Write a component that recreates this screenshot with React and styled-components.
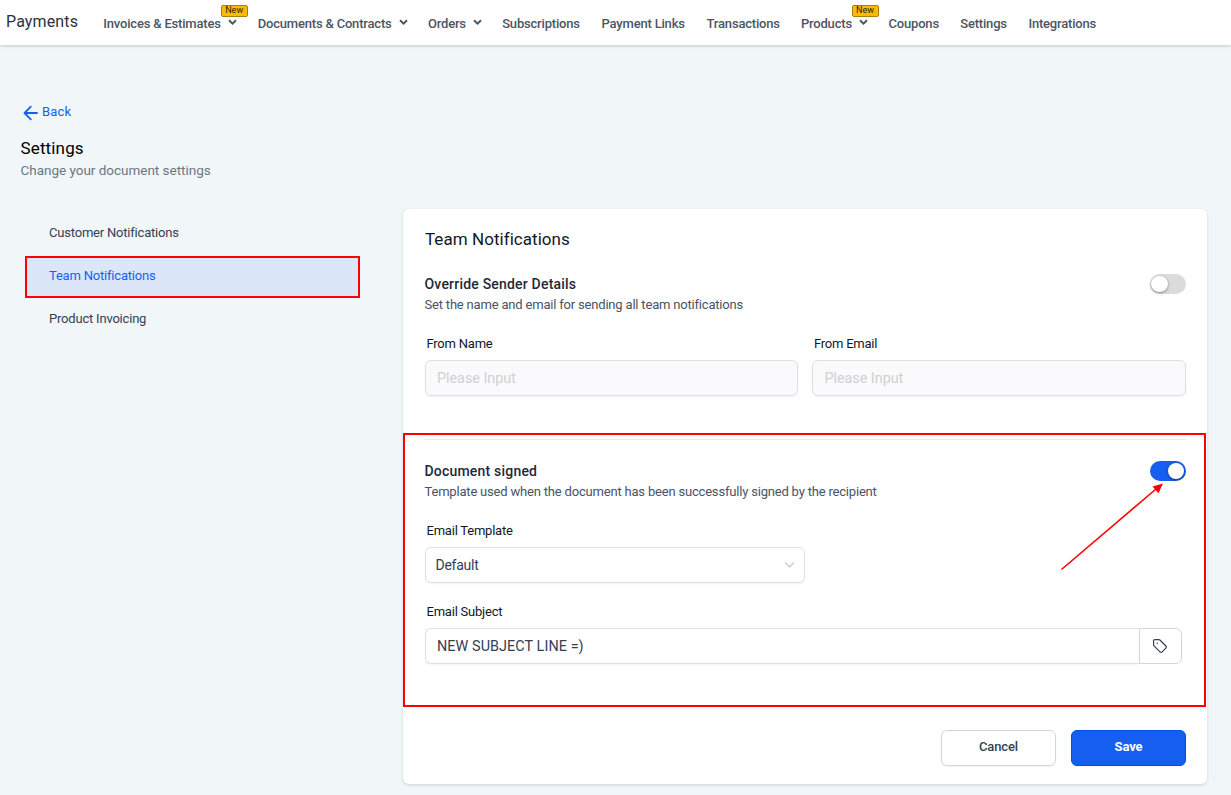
import styled, { createGlobalStyle } from 'styled-components';

const GlobalStyle = createGlobalStyle`
	*, *::before, *::after {
		box-sizing: border-box;
	}

	body {
		margin: 0;
		background-color: #f1f6f9;
		font-family: Roboto, 'Liberation Sans', sans-serif;
		font-size: 13px;
		color: #101828;
		overflow: hidden;
	}

	input, button {
		font-family: inherit;
	}
`;

const Page = styled.div`
	position: relative;
	min-height: 795px;
`;

const Header = styled.header`
	display: flex;
	height: 45px;
	padding-left: 6px;
	background-color: #fff;
	box-shadow: 0 1px 3px rgba(16, 24, 40, 0.2);
`;

const Brand = styled.div`
	width: 97.3px;
	padding-top: 12px;
	font-size: 16px;
	line-height: 20px;
	letter-spacing: 0.13px;
	color: #2a3342;
`;

const Nav = styled.nav`
	display: flex;
	padding-top: 16px;
`;

const NavItem = styled.a`
	position: relative;
	display: flex;
	width: ${({ $width }) => $width}px;
	flex-shrink: 0;
	font-weight: 500;
	line-height: 16px;
	letter-spacing: -0.19px;
	color: #4b5563;
	white-space: nowrap;

	svg {
		margin: 3px 0 0 7px;
	}
`;

const NewBadge = styled.span`
	position: absolute;
	top: -11px;
	right: 10px;
	width: 27px;
	height: 12px;
	border: 1px solid #a87f10;
	border-radius: 2px;
	background-color: #ffb900;
	font-size: 9px;
	font-weight: 400;
	line-height: 9px;
	letter-spacing: 0;
	text-align: center;
	color: #2b2608;
`;

const Intro = styled.section`
	padding: 58px 0 0 20.5px;
`;

const BackLink = styled.a`
	display: flex;
	align-items: center;
	height: 18px;
	line-height: 18px;
	letter-spacing: 0.2px;
	color: #155eef;

	svg {
		margin: 2px 4.5px 0 2px;
	}
`;

const Title = styled.h1`
	margin: 16px 0 0;
	font-size: 17px;
	font-weight: 400;
	line-height: 22px;
	letter-spacing: 0.15px;
	color: #000;
`;

const Subtitle = styled.p`
	margin: 1px 0;
	font-size: 13.5px;
	line-height: 20px;
	letter-spacing: -0.02px;
	color: #6b7683;
`;

const Content = styled.main`
	display: flex;
	align-items: flex-start;
	padding: 28px 24px 0 25px;
`;

const SideMenu = styled.aside`
	width: 335px;
	margin: 4px 43px 0 0;
`;

const SideItem = styled.a`
	display: block;
	height: ${({ $active }) => ($active ? 42 : 43)}px;
	margin-bottom: ${({ $active }) => ($active ? 1 : 0)}px;
	padding-left: ${({ $active }) => ($active ? 22 : 24)}px;
	border: ${({ $active }) => ($active ? '2px solid #f00' : 'none')};
	background-color: ${({ $active }) => ($active ? '#dbe7f9' : 'transparent')};
	line-height: ${({ $active }) => ($active ? 35 : 40)}px;
	letter-spacing: -0.2px;
	color: ${({ $active }) => ($active ? '#155eef' : '#344054')};
`;

const Card = styled.section`
	flex: 1;
	height: 575px;
	border-radius: 6px;
	background-color: #fff;
	box-shadow: 0 1px 3px rgba(16, 24, 40, 0.16);
`;

const SenderSection = styled.div`
	height: 224px;
	padding: 19px 21px 0 22px;
`;

const CardTitle = styled.h2`
	margin: 0 0 24px;
	font-size: 17px;
	font-weight: 400;
	line-height: 22px;
	letter-spacing: 0.05px;
`;

const SectionHead = styled.div`
	display: flex;
	justify-content: space-between;
	align-items: flex-start;
	height: 40px;
`;

const SectionTitle = styled.h3`
	margin: 0 0 1px -0.5px;
	font-size: 14px;
	font-weight: 500;
	line-height: 20px;
	letter-spacing: 0.2px;
	color: #1d2939;
`;

const SectionText = styled.p`
	margin: 0 0 0 -0.5px;
	line-height: 20px;
	letter-spacing: -0.19px;
	color: #475467;
`;

const Toggle = styled.span`
	display: flex;
	justify-content: ${({ $on }) => ($on ? 'flex-end' : 'flex-start')};
	width: 36px;
	height: 20px;
	padding: 2px ${({ $on }) => ($on ? 2 : 1)}px;
	border-radius: 10px;
	background-color: ${({ $on }) => ($on ? '#155eef' : '#dbdbdb')};

	&::after {
		content: '';
		width: ${({ $on }) => ($on ? 16 : 17)}px;
		height: 16px;
		border-radius: 50%;
		background-color: #fff;
		box-shadow: 0 1px 3px rgba(0, 0, 0, 0.4);
	}
`;

const FieldRow = styled.div`
	display: grid;
	grid-template-columns: 373px 1fr;
	gap: 14.4px;
`;

const Field = styled.label`
	display: block;
	width: ${({ $width }) => ($width ? `${$width}px` : 'auto')};
	margin-top: ${({ $top }) => $top || 19}px;
`;

const Label = styled.span`
	display: block;
	height: 27px;
	padding: 1px 0 0 1.5px;
	line-height: 20px;
	letter-spacing: -0.22px;
`;

const Input = styled.input`
	display: block;
	width: 100%;
	height: 36px;
	padding: 0 11px;
	border: 1px solid #dfe0e6;
	border-radius: 6px;
	background-color: #fff;
	box-shadow: 0 1px 2px rgba(16, 24, 40, 0.05);
	font-size: 14.4px;
	letter-spacing: -0.03px;
	color: #344054;

	&:disabled {
		background-color: #fafafc;
	}

	&::placeholder {
		color: #d0d0d2;
	}
`;

const Highlight = styled.div`
	width: 803px;
	height: 274px;
	padding: 4px 18px 0 20px;
	border: 2px solid #f00;
`;

const Divider = styled.hr`
	height: 1px;
	margin: 0 0 21px;
	border: 0;
	background-color: #e9eaeb;
`;

const Select = styled.div`
	display: flex;
	justify-content: space-between;
	align-items: center;
	height: 36px;
	padding: 0 9px 0 9.5px;
	border: 1px solid #dfe0e6;
	border-radius: 6px;
	box-shadow: 0 1px 2px rgba(16, 24, 40, 0.05);
	font-size: 14px;
	letter-spacing: -0.25px;
	color: #344054;
`;

const InputGroup = styled.div`
	display: flex;

	${Input} {
		flex: 1;
		border-right: 0;
		border-radius: 6px 0 0 6px;
		letter-spacing: 0.07px;
	}
`;

const TagButton = styled.button`
	display: flex;
	justify-content: center;
	align-items: center;
	width: 43px;
	height: 36px;
	padding: 0 1px 0 0;
	border: 1px solid #d0d5dd;
	border-radius: 0 6px 6px 0;
	background-color: #fff;
`;

const Footer = styled.footer`
	display: flex;
	justify-content: flex-end;
	gap: 15px;
	padding: 23px 21px 0 0;
`;

const Button = styled.button`
	width: 115px;
	height: 36px;
	padding: 0 0 3px;
	border: 1px solid ${({ $primary }) => ($primary ? '#004eeb' : '#d0d5dd')};
	border-radius: 6px;
	background-color: ${({ $primary }) => ($primary ? '#155eef' : '#fff')};
	box-shadow: 0 1px 2px rgba(16, 24, 40, 0.05);
	font-size: 13px;
	font-weight: ${({ $primary }) => ($primary ? 700 : 500)};
	letter-spacing: -0.1px;
	color: ${({ $primary }) => ($primary ? '#fff' : '#344054')};
`;

const Pointer = styled.svg`
	position: absolute;
	top: 480px;
	left: 1058px;
`;

const navItems = [
	{ label: 'Invoices & Estimates', width: 154.4, menu: true, badge: true },
	{ label: 'Documents & Contracts', width: 170.3, menu: true },
	{ label: 'Orders', width: 74.2, menu: true },
	{ label: 'Subscriptions', width: 99.4 },
	{ label: 'Payment Links', width: 105 },
	{ label: 'Transactions', width: 94.4 },
	{ label: 'Products', width: 87.6, menu: true, badge: true },
	{ label: 'Coupons', width: 71.7 },
	{ label: 'Settings', width: 68.2 },
	{ label: 'Integrations', width: 80 }
];

const sideItems = ['Customer Notifications', 'Team Notifications', 'Product Invoicing'];

const NavChevron = () => (
	<svg width="9" height="7" viewBox="0 0 9 7" fill="none" stroke="#4b5563" strokeWidth="2">
		<path d="M1 1.2 4.5 4.7 8 1.2" />
	</svg>
);

const ArrowLeft = () => (
	<svg width="15" height="16" viewBox="0 0 15 16" fill="none" stroke="#155eef" strokeWidth="1.8" strokeLinecap="round" strokeLinejoin="round">
		<path d="M14 8H1.5M7.8 1.7 1.5 8 7.8 14.3" />
	</svg>
);

const SelectChevron = () => (
	<svg width="11" height="8" viewBox="0 0 11 8" fill="none" stroke="#c2c4c8" strokeWidth="1.1">
		<path d="M1 1.5 5.5 6 10 1.5" />
	</svg>
);

const TagIcon = () => (
	<svg width="16" height="16" viewBox="0 0 16 16" fill="none" stroke="#344054" strokeWidth="1.2" strokeLinecap="round" strokeLinejoin="round">
		<path d="M1.6 2.8c0-.7.5-1.2 1.2-1.2h4.1c.4 0 .7.1 1 .4l6 6a1.5 1.5 0 0 1 0 2.1l-3.8 3.8a1.5 1.5 0 0 1-2.1 0l-6-6a1.4 1.4 0 0 1-.4-1z" />
		<path d="M5.2 5.2h.01" strokeWidth="1.4" />
	</svg>
);

const App = () => (
	<Page>
		<GlobalStyle />
		<Header>
			<Brand>Payments</Brand>
			<Nav>
				{navItems.map(({ label, width, menu, badge }) => (
					<NavItem key={label} $width={width}>
						{label}
						{menu && <NavChevron />}
						{badge && <NewBadge>New</NewBadge>}
					</NavItem>
				))}
			</Nav>
		</Header>
		<Intro>
			<BackLink>
				<ArrowLeft />
				Back
			</BackLink>
			<Title>Settings</Title>
			<Subtitle>Change your document settings</Subtitle>
		</Intro>
		<Content>
			<SideMenu>
				{sideItems.map((item) => (
					<SideItem key={item} $active={item === 'Team Notifications'}>
						{item}
					</SideItem>
				))}
			</SideMenu>
			<Card>
				<SenderSection>
					<CardTitle>Team Notifications</CardTitle>
					<SectionHead>
						<div>
							<SectionTitle>Override Sender Details</SectionTitle>
							<SectionText>Set the name and email for sending all team notifications</SectionText>
						</div>
						<Toggle />
					</SectionHead>
					<FieldRow>
						<Field>
							<Label>From Name</Label>
							<Input placeholder="Please Input" disabled />
						</Field>
						<Field>
							<Label>From Email</Label>
							<Input placeholder="Please Input" disabled />
						</Field>
					</FieldRow>
				</SenderSection>
				<Highlight>
					<Divider />
					<SectionHead>
						<div>
							<SectionTitle>Document signed</SectionTitle>
							<SectionText>Template used when the document has been successfully signed by the recipient</SectionText>
						</div>
						<Toggle $on />
					</SectionHead>
					<Field $width={380}>
						<Label>Email Template</Label>
						<Select>
							Default
							<SelectChevron />
						</Select>
					</Field>
					<Field $width={757} $top={18}>
						<Label>Email Subject</Label>
						<InputGroup>
							<Input defaultValue="NEW SUBJECT LINE =)" />
							<TagButton type="button">
								<TagIcon />
							</TagButton>
						</InputGroup>
					</Field>
				</Highlight>
				<Footer>
					<Button type="button">Cancel</Button>
					<Button type="button" $primary>
						Save
					</Button>
				</Footer>
			</Card>
		</Content>
		<Pointer width="108" height="94" viewBox="0 0 108 94">
			<path d="M3.5 89.5 98 9" stroke="#f00" strokeWidth="1.6" />
			<path d="M105 3.5 100.5 13.2 94.5 6.5z" fill="#f00" />
		</Pointer>
	</Page>
);

export default App;
